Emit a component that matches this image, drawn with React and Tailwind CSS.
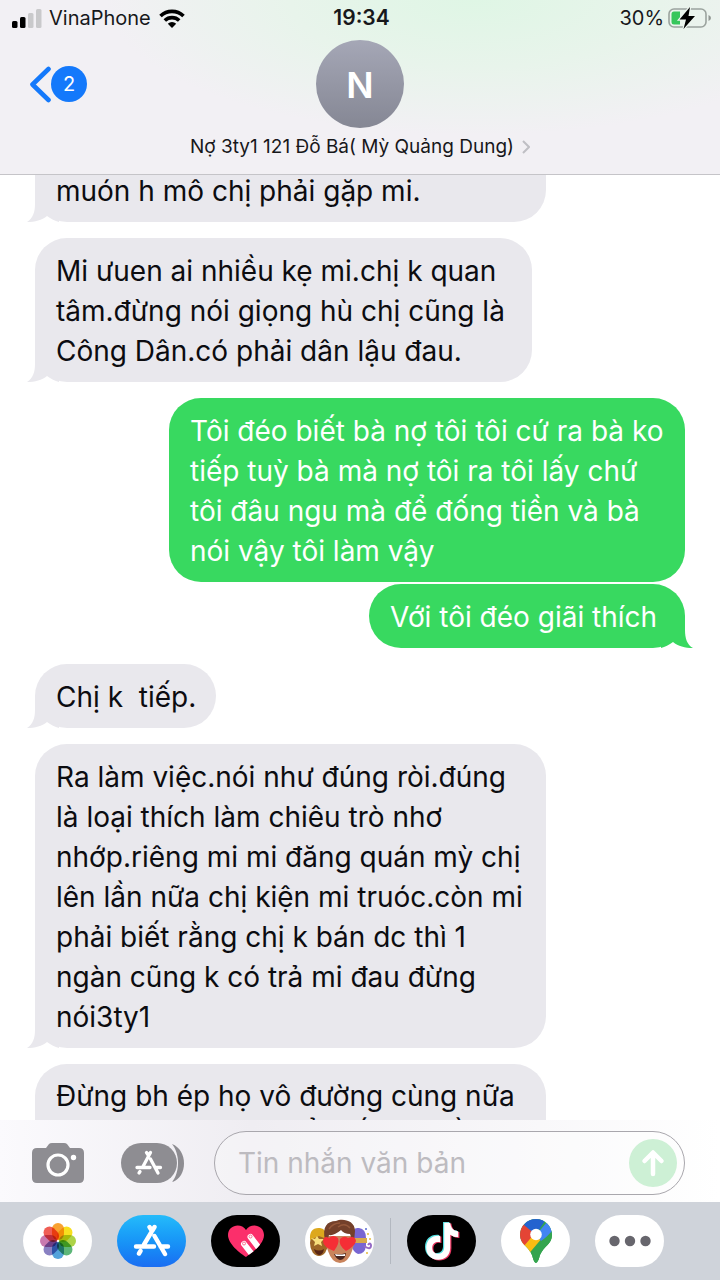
import React from "react";

const messages = [
  { side: "in", tail: true, cut: "top", width: "w-[511px]", leading: "leading-10", lines: ["muón h mô chị phải gặp mi."], space: "mb-4" },
  {
    side: "in", tail: true, width: "w-[497px]", leading: "leading-10", space: "mb-4",
    lines: ["Mi ưuen ai nhiều kẹ mi.chị k quan", "tâm.đừng nói giọng hù chị cũng là", "Công Dân.có phải dân lậu đau."],
  },
  {
    side: "out", tail: false, width: "w-[516px]", leading: "leading-10", space: "mb-0.5",
    lines: ["Tôi đéo biết bà nợ tôi tôi cứ ra bà ko", "tiếp tuỳ bà mà nợ tôi ra tôi lấy chứ", "tôi đâu ngu mà để đống tiền và bà", "nói vậy tôi làm vậy"],
  },
  { side: "out", tail: true, width: "w-[316px]", leading: "leading-10", space: "mb-4", lines: ["Với tôi đéo giãi thích"] },
  { side: "in", tail: true, width: "w-[181px]", leading: "leading-10", space: "mb-4", lines: ["Chị k  tiếp."] },
  {
    side: "in", tail: true, width: "w-[511px]", leading: "leading-10", space: "mb-4",
    lines: ["Ra làm việc.nói như đúng ròi.đúng", "là loại thích làm chiêu trò nhơ", "nhớp.riêng mi mi đăng quán mỳ chị", "lên lần nữa chị kiện mi truóc.còn mi", "phải biết rằng chị k bán dc thì 1", "ngàn cũng k có trả mi đau đừng", "nói3ty1"],
  },
  {
    side: "in", tail: false, width: "w-[511px]", leading: "leading-[38px]", space: "",
    lines: ["Đừng bh ép họ vô đường cùng nữa", "Chị nên nghĩ cho kể thế nào về"],
  },
];

function Tail({ side }) {
  return side === "in" ? (
    <svg className="absolute bottom-0 -left-2 h-8 w-8 text-[#e9e8ed]" viewBox="0 0 32 32" aria-hidden="true">
      <path fill="currentColor" d="M8 0V14C8 22 6 28 0 32C8 32 15 30 20 26C24 29 28 31 32 32V0Z" />
    </svg>
  ) : (
    <svg className="absolute -right-2 bottom-0 h-8 w-8 text-[#38d960]" viewBox="0 0 32 32" aria-hidden="true">
      <path fill="currentColor" d="M24 0V14C24 22 26 29 32 32C24 32 17 30 12 26C8 29 4 31 0 32V0Z" />
    </svg>
  );
}

function Message({ m }) {
  const incoming = m.side === "in";
  return (
    <li
      className={`relative max-w-full shrink-0 px-[21px] pb-[11px] text-[28px] ${m.leading} ${m.width} ${m.space} ${
        incoming ? "self-start bg-[#e9e8ed] text-[#0c0c10]" : "self-end bg-[#38d960] text-white"
      } ${m.cut ? "rounded-b-[32px]" : "rounded-[32px] pt-[13px]"}`}
    >
      {m.tail && <Tail side={m.side} />}
      {m.lines.map((line) => (
        <span key={line} className="relative block whitespace-pre">{line}</span>
      ))}
    </li>
  );
}

function AppStoreMark({ className }) {
  return (
    <svg className={className} viewBox="0 0 38 34" fill="none" stroke="currentColor" strokeWidth="4.400" strokeLinecap="round" aria-hidden="true">
      <path d="M21.500 3L11 20.500M16.500 3L19 7M3 22.500H21M27.500 22.500H35M21.500 12L32 30M7.500 27L6 29.500" />
    </svg>
  );
}

function StatusBar() {
  return (
    <div className="flex h-9 items-center pr-2 pl-[11px] text-[20px] text-[#17181b]">
      <div className="flex flex-1 items-center">
        <svg className="h-[19px] w-[31px]" viewBox="0 0 31 19" aria-hidden="true">
          <rect x="1" y="12" width="5.500" height="7" rx="1.500" fill="#000" />
          <rect x="9" y="8" width="5.500" height="11" rx="1.500" fill="#000" />
          <rect x="17" y="4" width="5.500" height="15" rx="1.500" fill="#c9c9cb" />
          <rect x="25" y="0" width="5.500" height="19" rx="1.500" fill="#c9c9cb" />
        </svg>
        <span className="ml-[7px]">VinaPhone</span>
        <svg className="ml-2 h-[19px] w-[26px]" viewBox="0 0 26 19" aria-hidden="true">
          <g fill="none" stroke="#000" strokeWidth="3.600">
            <path d="M1.500 7A16.500 16.500 0 0 1 24.500 7" />
            <path d="M5.800 11.500A10.500 10.500 0 0 1 20.200 11.500" />
          </g>
          <path d="M13 19L8.800 14.800A6 6 0 0 1 17.200 14.800Z" />
        </svg>
      </div>
      <time className="text-[21px] font-semibold">19:34</time>
      <div className="flex flex-1 items-center justify-end">
        <span>30%</span>
        <svg className="ml-1 h-[22px] w-[44px]" viewBox="0 0 44 22" aria-hidden="true">
          <rect x="1" y="2" width="37" height="18" rx="5" fill="none" stroke="#9ba39e" strokeWidth="1.600" />
          <path d="M40.500 8V14Q43 13 43 11T40.500 8Z" fill="#929894" />
          <path d="M6 4.500H12V17.500H6Q3.500 17.500 3.500 15V7Q3.500 4.500 6 4.500Z" fill="#36c65b" />
          <path d="M22 0L11.500 12.500H18L15.500 22L27 9H20.500Z" fill="#000" stroke="#edf5ef" strokeWidth="2.400" paintOrder="stroke" />
        </svg>
      </div>
    </div>
  );
}

function Header() {
  return (
    <header className="relative z-10 h-[175px] shrink-0 border-b border-[#c5c4c8] bg-[#f2f0f4] bg-[radial-gradient(ellipse_370px_135px_at_66%_0%,#dff6e5_0%,#e8f4eb_50%,transparent_100%)]">
      <StatusBar />
      <div className="grid grid-cols-[1fr_auto_1fr] px-[29px] pt-1">
        <button type="button" aria-label="Quay lại, 2 tin chưa đọc" className="flex h-[88px] items-center justify-self-start text-[#1479fb]">
          <svg className="h-[37px] w-[22px]" viewBox="0 0 22 37" fill="none" stroke="currentColor" strokeWidth="4.600" strokeLinecap="round" strokeLinejoin="round" aria-hidden="true">
            <path d="M19.500 3L3.500 18.500L19.500 34" />
          </svg>
          <span className="flex size-9 items-center justify-center rounded-full bg-[#1479fb] text-[20px] text-white">2</span>
        </button>
        <div className="flex size-[88px] items-center justify-center rounded-full bg-linear-to-b from-[#a5a7b6] to-[#858794] pt-0.5 text-[36px] font-semibold text-white">N</div>
      </div>
      <button type="button" className="mx-auto flex h-[38px] items-center gap-2 text-[19px] text-[#17171a]">
        Nợ 3ty1 121 Đỗ Bá( Mỳ Quảng Dung)
        <svg className="h-3.5 w-2" viewBox="0 0 8 14" fill="none" stroke="#bfbfc4" strokeWidth="2" aria-hidden="true">
          <path d="M1 1L7 7L1 13" />
        </svg>
      </button>
    </header>
  );
}

function Composer() {
  return (
    <form onSubmit={(e) => e.preventDefault()} className="relative z-10 flex h-[82px] shrink-0 items-center bg-linear-to-r from-[#fbfafd] via-[#efedf2] via-35% to-white pt-1 pr-[35px] pl-[31px]">
      <button type="button" aria-label="Máy ảnh" className="text-[#8e8d92]">
        <svg className="h-[42px] w-[54px]" viewBox="0 0 54 42" aria-hidden="true">
          <path fill="currentColor" d="M6 6H15L18 2Q19 1 21 1H33Q35 1 36 2L39 6H48Q53 6 53 11V36Q53 41 48 41H6Q1 41 1 36V11Q1 6 6 6Z" />
          <circle cx="27" cy="23" r="10" fill="none" stroke="#fff" strokeWidth="3.200" />
          <circle cx="42.500" cy="15.500" r="2.700" fill="#fff" />
        </svg>
      </button>
      <button type="button" aria-label="Ứng dụng" className="ml-9 text-[#8e8d92]">
        <svg className="h-[42px] w-16" viewBox="0 0 64 42" aria-hidden="true">
          <path fill="currentColor" d="M51 2C67 8 67 35 51 40C59 30 59 12 51 2Z" />
          <rect x="0" y="1" width="56" height="40" rx="20" fill="currentColor" />
          <g fill="none" stroke="#fff" strokeWidth="3.300" strokeLinecap="round">
            <path d="M29.500 10.500L22 24.500M25.500 10.500L27.500 13.500M16 25.500H29M34 25.500H39.500M29.500 17L37 31M19 29.500L18 31" />
          </g>
        </svg>
      </button>
      <div className="ml-[29px] flex h-16 min-w-0 flex-1 items-center rounded-full border border-[#a9a7ad] bg-white/30 pr-[7px] pl-[23px]">
        <input aria-label="Tin nhắn văn bản" placeholder="Tin nhắn văn bản" className="min-w-0 flex-1 bg-transparent text-[28px] outline-none placeholder:text-[#bdbbc0]" />
        <button type="submit" aria-label="Gửi" className="flex size-12 items-center justify-center rounded-full bg-[#cdf0d5] text-white">
          <svg className="h-7 w-6" viewBox="0 0 24 28" fill="none" stroke="currentColor" strokeWidth="4.500" strokeLinecap="round" strokeLinejoin="round" aria-hidden="true">
            <path d="M12 25V4M3.500 12L12 3.500L20.500 12" />
          </svg>
        </button>
      </div>
    </form>
  );
}

const petals = ["#f79a1f", "#f6dc0c", "#a6cf38", "#4fb06c", "#459bd8", "#7f76bd", "#c46fa8", "#ee5046"];

function Photos() {
  return (
    <svg className="size-9" viewBox="0 0 36 36" aria-hidden="true">
      {petals.map((color, i) => (
        <rect key={color} x="12" y="0" width="12" height="17" rx="6" fill={color} fillOpacity=".92" transform={`rotate(${i * 45} 18 18)`} className="mix-blend-multiply" />
      ))}
    </svg>
  );
}

function HeartHands() {
  return (
    <svg className="h-8 w-9" viewBox="0 0 36 32" aria-hidden="true">
      <defs>
        <clipPath id="heart">
          <path d="M18 32C12 28 0 19 0 10C0 0 13-3 18 5C23-3 36 0 36 10C36 19 24 28 18 32Z" />
        </clipPath>
      </defs>
      <g clipPath="url(#heart)">
        <path fill="#fb2f6b" d="M0 0H36V32H0Z" />
        <path stroke="#fff" strokeWidth="6" strokeLinecap="round" d="M16 19L27 33M22.500 12L34 27" />
        <g fill="none" stroke="#fb6c91" strokeWidth="1">
          <circle cx="16" cy="18.500" r="1.500" />
          <circle cx="22.500" cy="11.500" r="1.500" />
        </g>
      </g>
    </svg>
  );
}

function Memoji() {
  return (
    <svg className="h-[46px] w-[66px]" viewBox="0 0 66 46" aria-hidden="true">
      <ellipse cx="12" cy="25" rx="9" ry="13" fill="#9d6626" />
      <path d="M3 22Q2 9 13 10Q20 11 20 21L12 18Z" fill="#dda81d" />
      <path d="M4 20L8 21L10 18L12 21L17 21L14 24L15 28L11 26L7 28L8 24Z" fill="#f8e07c" />
      <path d="M7 31Q12 34 17 31Q16 37 12 37Q8 36 7 31Z" fill="#592615" />
      <path d="M45 17Q45 9 52 10Q59 11 59 20V28Q58 36 51 36Q46 34 45 28Z" fill="#7866d2" />
      <path d="M46 20H60V25H46Z" fill="#d7a94c" />
      <path d="M57 28Q64 33 64 27Q63 24 61 27" fill="none" stroke="#966bc6" strokeWidth="2" />
      <g fill="#e4bb39"><circle cx="61" cy="16" r="1" /><circle cx="63" cy="21" r="1" /><circle cx="60" cy="35" r="1" /></g>
      <circle cx="59" cy="11" r="1" fill="#596bd0" />
      <path d="M19 18H46Q48 26 45 33Q41 45 33 45Q25 45 21 33Q18 26 19 18Z" fill="#c9845c" />
      <path d="M18 22C15 9 20 3 29 3C35 0 48 2 48 13Q48 19 46 24L43 16Q37 16 34 12Q27 18 22 17L20 24Z" fill="#74402a" />
      <path d="M22 11Q26 5 33 5M31 9Q38 4 43 10" fill="none" stroke="#95583b" strokeWidth="1.400" />
      <g fill="#f52e35">
        <path d="M27 33Q16 29 16 23Q17 17 22 20Q26 16 31 20Q33 25 27 33Z" />
        <path d="M39 33Q31 27 33 21Q37 17 41 20Q48 17 49 23Q48 28 39 33Z" />
      </g>
      <path d="M27 36Q33 37 39 35Q38 42 33 42Q29 41 27 36Z" fill="#49251f" />
      <path d="M28 36Q33 37 38 36V38H29Z" fill="#fff" />
    </svg>
  );
}

const note = "M19 1H25C25.500 6 28 9 33 9.500V15.500Q28.500 15.500 25 13V26C25 34 19.500 38 13 38C5 38 1 32 1 26C1 18 7 13 15 14V20.500C10 19 7 22 7 26C7 30 10 32 13 32C17 32 19 29 19 25Z";

function TikTok() {
  return (
    <svg className="h-10 w-9" viewBox="0 0 36 40" aria-hidden="true">
      <path d={note} fill="#52ddde" />
      <path d={note} fill="#e93762" transform="translate(2.4 1.6)" />
      <path d={note} fill="#fff" transform="translate(1.2 .8)" />
    </svg>
  );
}

function Maps() {
  return (
    <svg className="h-11 w-8" viewBox="0 0 32 44" aria-hidden="true">
      <defs>
        <clipPath id="pin">
          <path d="M16 0C7 0 0 7 0 16C0 25 8 27 12 36Q14 44 16 44Q18 44 20 36C24 27 32 25 32 16C32 7 25 0 16 0Z" />
        </clipPath>
      </defs>
      <g clipPath="url(#pin)">
        <path d="M0 0H32V44H0Z" fill="#34a44e" />
        <path d="M0 25L12 11L23 18L6 38H0Z" fill="#fbbc12" />
        <path d="M0 4L5 6L15 14L4 27H0Z" fill="#e44435" />
        <path d="M4 6L7 0H26L16 16Z" fill="#2463cf" />
        <path d="M16 16L27 3L32 10V14L21 22Z" fill="#4285f4" />
        <path d="M32 12L18 27L6 40L16 44L32 28Z" fill="#34a44e" />
      </g>
      <circle cx="16" cy="15.500" r="5.800" fill="#fff" />
    </svg>
  );
}

function AppButton({ label, tone, children }) {
  return (
    <button type="button" aria-label={label} className={`flex h-[52px] w-[69px] shrink-0 items-center justify-center overflow-hidden rounded-full ${tone}`}>
      {children}
    </button>
  );
}

function AppStrip() {
  return (
    <nav aria-label="Ứng dụng iMessage" className="relative z-10 flex h-[78px] shrink-0 items-center bg-[#cfd3da] px-[23px]">
      <div className="flex gap-[25px]">
        <AppButton label="Ảnh" tone="bg-white"><Photos /></AppButton>
        <AppButton label="App Store" tone="bg-linear-to-b from-[#25bbfa] to-[#1b6df2] text-white"><AppStoreMark className="h-[34px] w-[38px]" /></AppButton>
        <AppButton label="Digital Touch" tone="bg-black"><HeartHands /></AppButton>
        <AppButton label="Memoji" tone="bg-white"><Memoji /></AppButton>
      </div>
      <div className="mx-4 h-[46px] w-px bg-[#b3b8c0]" />
      <div className="flex gap-[25px]">
        <AppButton label="TikTok" tone="bg-black"><TikTok /></AppButton>
        <AppButton label="Google Maps" tone="bg-white"><Maps /></AppButton>
        <AppButton label="Thêm" tone="bg-white">
          <svg className="h-3 w-[42px]" viewBox="0 0 42 12" fill="#67666d" aria-hidden="true">
            <circle cx="5.500" cy="6" r="5.200" /><circle cx="21" cy="6" r="5.200" /><circle cx="36.500" cy="6" r="5.200" />
          </svg>
        </AppButton>
      </div>
    </nav>
  );
}

export default function App() {
  return (
    <div className="flex h-screen flex-col overflow-hidden bg-white font-['Inter','Liberation_Sans',sans-serif]">
      <Header />
      <main className="min-h-0 flex-1 overflow-hidden">
        <ul className="-mt-1 flex flex-col px-[35px]">
          {messages.map((m) => <Message key={m.lines[0]} m={m} />)}
        </ul>
      </main>
      <Composer />
      <AppStrip />
    </div>
  );
}
